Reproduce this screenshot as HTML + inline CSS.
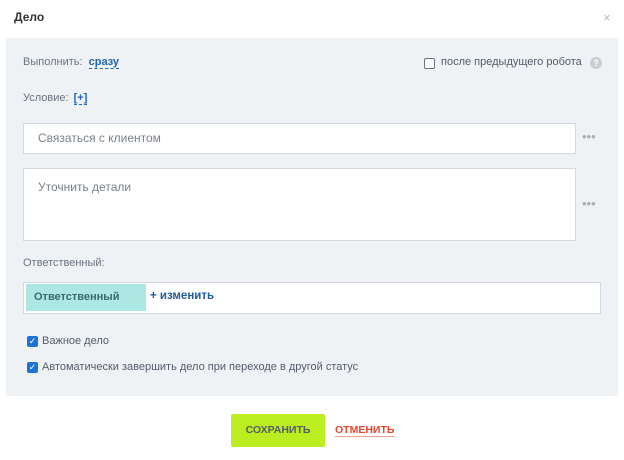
<!DOCTYPE html>
<html><head><meta charset="utf-8"><style>
body{margin:0;width:624px;height:460px;background:#fff;font-family:"Liberation Sans",sans-serif;position:relative;overflow:hidden;font-size:11px;color:#535c69}
.a{position:absolute}
.panel{left:6px;top:38px;width:612px;height:358px;background:#eef2f4}
.inp{background:#fff;border:1px solid #d5d9dd;box-sizing:border-box}
.dots{color:#a8adb4;font-size:13px}
.link{color:#2067b0;font-weight:bold;border-bottom:1px dashed #2067b0}
.cb{width:11px;height:11px;background:#1e74d6;border-radius:2px;color:#fff;font-size:9px;line-height:11px;text-align:center}
</style></head><body>
<div class="a" style="left:14px;top:10px;font-weight:bold;font-size:12px;color:#333">Дело</div>
<div class="a" style="left:603px;top:10px;color:#b5b8bd;font-size:13px">×</div>
<div class="a panel"></div>
<div class="a" style="left:23px;top:56px;color:#6a737f">Выполнить: <span class="link" style="margin-left:3px">сразу</span></div>
<div class="a" style="left:424px;top:58px;width:9px;height:9px;border:1px solid #6a737f;border-radius:2px;background:#fff"></div>
<div class="a" style="left:441px;top:56px;color:#535c69">после предыдущего робота</div>
<div class="a" style="left:590px;top:57px;width:12px;height:12px;border-radius:50%;background:#c9ced3;color:#fff;font-size:9px;line-height:12px;text-align:center;font-weight:bold">?</div>
<div class="a" style="left:23px;top:92px;color:#6a737f">Условие: <span class="link" style="margin-left:2px">[+]</span></div>
<div class="a inp" style="left:23px;top:123px;width:553px;height:31px"></div>
<div class="a" style="left:38px;top:131px;font-size:12px;color:#7a8189">Связаться с клиентом</div>
<div class="a dots" style="left:582px;top:129px">•••</div>
<div class="a inp" style="left:23px;top:168px;width:553px;height:73px"></div>
<div class="a" style="left:38px;top:180px;font-size:12px;color:#7a8189">Уточнить детали</div>
<div class="a dots" style="left:582px;top:196px">•••</div>
<div class="a" style="left:23px;top:257px;color:#6a737f">Ответственный:</div>
<div class="a inp" style="left:23px;top:282px;width:578px;height:32px"></div>
<div class="a" style="left:26px;top:284px;width:120px;height:27px;background:#ade7e3"></div>
<div class="a" style="left:34px;top:291px;font-weight:bold;color:#3b6a6d;font-size:11px">Ответственный</div>
<div class="a" style="left:129px;top:290px;color:#bfe0de;font-size:12px">×</div>
<div class="a" style="left:150px;top:290px;font-weight:bold;color:#1f5b9a;font-size:11.5px">+ изменить</div>
<div class="a cb" style="left:27px;top:336px">✓</div>
<div class="a" style="left:42px;top:335px">Важное дело</div>
<div class="a cb" style="left:27px;top:362px">✓</div>
<div class="a" style="left:42px;top:361px">Автоматически завершить дело при переходе в другой статус</div>
<div class="a" style="left:231px;top:414px;width:94px;height:33px;background:#bbed21;border-radius:2px;color:#535c69;font-weight:bold;font-size:10.5px;line-height:33px;text-align:center">СОХРАНИТЬ</div>
<div class="a" style="left:335px;top:424px;color:#e0472f;font-weight:bold;font-size:10.5px;border-bottom:1px solid #f0a090">ОТМЕНИТЬ</div>
</body></html>
